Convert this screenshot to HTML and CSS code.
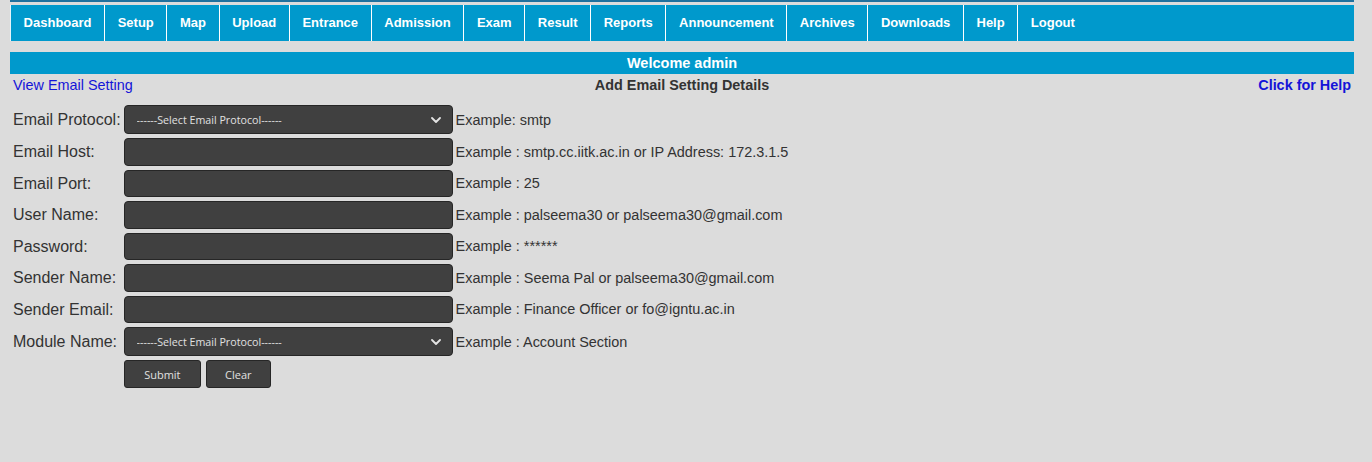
FILE: index.html
```html
<!DOCTYPE html>
<html>
<head>
<meta charset="utf-8">
<title>Add Email Setting Details</title>
<link rel="stylesheet" href="styles.css">
</head>
<body>
<div class="page">
  <div class="topline"></div>
  <nav class="menu">
    <a href="#">Dashboard</a>
    <a href="#">Setup</a>
    <a href="#">Map</a>
    <a href="#">Upload</a>
    <a href="#">Entrance</a>
    <a href="#">Admission</a>
    <a href="#">Exam</a>
    <a href="#">Result</a>
    <a href="#">Reports</a>
    <a href="#">Announcement</a>
    <a href="#">Archives</a>
    <a href="#">Downloads</a>
    <a href="#">Help</a>
    <a href="#">Logout</a>
  </nav>
  <div class="welcome">Welcome admin</div>
  <div class="subhead">
    <a class="view-link" href="#">View Email Setting</a>
    <span class="title">Add Email Setting Details</span>
    <a class="help-link" href="#">Click for Help</a>
  </div>
  <form class="form">
    <label class="lbl">Email Protocol:</label>
    <div class="select-wrap">
      <select class="ctrl select"><option>------Select Email Protocol------</option></select>
      <svg class="chev" width="10" height="6" viewBox="0 0 10 6"><path d="M1 1 L5 5 L9 1" fill="none" stroke="#e4e4e4" stroke-width="1.8" stroke-linecap="round" stroke-linejoin="round"/></svg>
    </div>
    <span class="ex">Example: smtp</span>

    <label class="lbl">Email Host:</label>
    <input class="ctrl input" type="text">
    <span class="ex">Example : smtp.cc.iitk.ac.in or IP Address: 172.3.1.5</span>

    <label class="lbl">Email Port:</label>
    <input class="ctrl input" type="text">
    <span class="ex">Example : 25</span>

    <label class="lbl">User Name:</label>
    <input class="ctrl input" type="text">
    <span class="ex">Example : palseema30 or palseema30@gmail.com</span>

    <label class="lbl">Password:</label>
    <input class="ctrl input" type="password">
    <span class="ex">Example : ******</span>

    <label class="lbl">Sender Name:</label>
    <input class="ctrl input" type="text">
    <span class="ex">Example : Seema Pal or palseema30@gmail.com</span>

    <label class="lbl">Sender Email:</label>
    <input class="ctrl input" type="text">
    <span class="ex">Example : Finance Officer or fo@igntu.ac.in</span>

    <label class="lbl">Module Name:</label>
    <div class="select-wrap">
      <select class="ctrl select"><option>------Select Email Protocol------</option></select>
      <svg class="chev" width="10" height="6" viewBox="0 0 10 6"><path d="M1 1 L5 5 L9 1" fill="none" stroke="#e4e4e4" stroke-width="1.8" stroke-linecap="round" stroke-linejoin="round"/></svg>
    </div>
    <span class="ex">Example : Account Section</span>

    <span></span>
    <div class="buttons">
      <button type="button" class="btn btn-submit">Submit</button>
      <button type="button" class="btn btn-clear">Clear</button>
    </div>
    <span></span>
  </form>
</div>
</body>
</html>
```

FILE: styles.css
```css
html, body {
  margin: 0;
  padding: 0;
  background: #dcdcdc;
}
body {
  font-family: "Liberation Sans", Arial, sans-serif;
  color: #333333;
}
.page {
  width: 1344px;
  margin-left: 10px;
}
.topline {
  height: 2px;
  background: #1f719e;
}
.menu {
  display: flex;
  margin-top: 3px;
  height: 36px;
  background: #0099cc;
  border-left: 1px solid #e6f4fa;
}
.menu a {
  display: block;
  padding: 0 12.6px;
  line-height: 36px;
  font-size: 13px;
  font-weight: bold;
  color: #ffffff;
  text-decoration: none;
  border-right: 1px solid #ffffff;
}
.menu a:last-child {
  border-right: none;
}
.welcome {
  margin-top: 11px;
  height: 22px;
  line-height: 22px;
  background: #0099cc;
  color: #ffffff;
  font-weight: bold;
  font-size: 14.5px;
  text-align: center;
}
.subhead {
  display: grid;
  grid-template-columns: 1fr auto 1fr;
  height: 22px;
  line-height: 22px;
  padding: 0 3px;
  font-size: 14.4px;
}
.view-link {
  color: #1414d8;
  text-decoration: none;
  justify-self: start;
}
.title {
  font-weight: bold;
  color: #333333;
}
.help-link {
  color: #1414d8;
  font-weight: bold;
  text-decoration: none;
  justify-self: end;
}
.form {
  display: grid;
  grid-template-columns: auto 329px 1fr;
  column-gap: 3px;
  row-gap: 4px;
  align-items: center;
  margin-top: 9px;
  padding-left: 3px;
}
.lbl {
  font-size: 16px;
  color: #333333;
  padding-top: 1px;
}
.ex {
  font-size: 14.45px;
  color: #333333;
}
.ctrl {
  box-sizing: border-box;
  width: 329px;
  margin: 0;
  background: #404040;
  border: 1px solid #262626;
  border-radius: 4px;
  color: #e0e0e0;
  font-family: "Open Sans", "Noto Sans", sans-serif;
  outline: none;
}
.input {
  height: 27.5px;
  padding: 0 8px;
  font-size: 12px;
}
.select-wrap {
  position: relative;
  height: 29px;
}
.select {
  height: 29px;
  -webkit-appearance: none;
  appearance: none;
  padding: 0 0 0 12px;
  font-size: 10.7px;
}
.chev {
  position: absolute;
  right: 12px;
  top: 12px;
  pointer-events: none;
}
.buttons {
  display: flex;
  gap: 4.5px;
}
.btn {
  box-sizing: border-box;
  height: 28px;
  padding: 0;
  margin: 0;
  background: #404040;
  border: 1px solid #262626;
  border-radius: 3px;
  color: #e0e0e0;
  font-family: "Open Sans", "Noto Sans", sans-serif;
  font-size: 11px;
  text-align: center;
}
.btn-submit {
  width: 77.5px;
}
.btn-clear {
  width: 65.5px;
}
```
